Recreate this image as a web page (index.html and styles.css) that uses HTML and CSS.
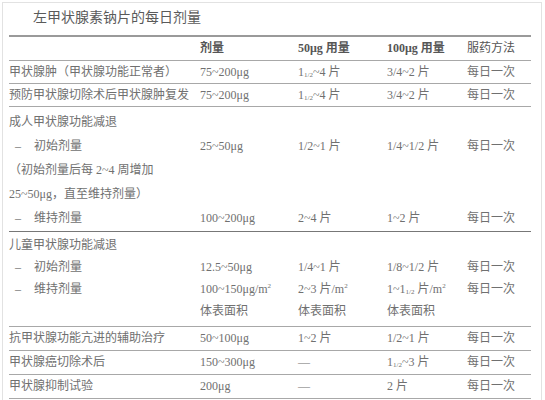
FILE: index.html
```html
<!DOCTYPE html>
<html lang="zh">
<head>
<meta charset="utf-8">
<title>左甲状腺素钠片的每日剂量</title>
<link rel="stylesheet" href="styles.css">
</head>
<body>
<div class="frame">
  <h1 class="title">左甲状腺素钠片的每日剂量</h1>
  <div class="table">
    <div class="group head">
      <div class="line"><span></span><span class="b">剂量</span><span class="b">50μg 用量</span><span class="b">100μg 用量</span><span class="h">服药方法</span></div>
    </div>
    <div class="group">
      <div class="line"><span>甲状腺肿（甲状腺功能正常者）</span><span>75~200μg</span><span>1<sub>1/2</sub>~4 片</span><span>3/4~2 片</span><span>每日一次</span></div>
    </div>
    <div class="group">
      <div class="line"><span>预防甲状腺切除术后甲状腺肿复发</span><span>75~200μg</span><span>1<sub>1/2</sub>~4 片</span><span>3/4~2 片</span><span>每日一次</span></div>
    </div>
    <div class="group adult dark">
      <div class="line"><span>成人甲状腺功能减退</span><span></span><span></span><span></span><span></span></div>
      <div class="line"><span><i class="dash">–</i>初始剂量</span><span>25~50μg</span><span>1/2~1 片</span><span>1/4~1/2 片</span><span>每日一次</span></div>
      <div class="line"><span>（初始剂量后每 2~4 周增加</span><span></span><span></span><span></span><span></span></div>
      <div class="line"><span>25~50μg，直至维持剂量）</span><span></span><span></span><span></span><span></span></div>
      <div class="line"><span><i class="dash">–</i>维持剂量</span><span>100~200μg</span><span>2~4 片</span><span>1~2 片</span><span>每日一次</span></div>
    </div>
    <div class="group child">
      <div class="line"><span>儿童甲状腺功能减退</span><span></span><span></span><span></span><span></span></div>
      <div class="line"><span><i class="dash">–</i>初始剂量</span><span>12.5~50μg</span><span>1/4~1 片</span><span>1/8~1/2 片</span><span>每日一次</span></div>
      <div class="line"><span><i class="dash">–</i>维持剂量</span><span>100~150μg/m<sup>2</sup></span><span>2~3 片/m<sup>2</sup></span><span>1~1<sub>1/2</sub> 片/m<sup>2</sup></span><span>每日一次</span></div>
      <div class="line"><span></span><span>体表面积</span><span>体表面积</span><span>体表面积</span><span></span></div>
    </div>
    <div class="group">
      <div class="line tall"><span>抗甲状腺功能亢进的辅助治疗</span><span>50~100μg</span><span>1~2 片</span><span>1/2~1 片</span><span>每日一次</span></div>
    </div>
    <div class="group">
      <div class="line tall"><span>甲状腺癌切除术后</span><span>150~300μg</span><span>—</span><span>1<sub>1/2</sub>~3 片</span><span>每日一次</span></div>
    </div>
    <div class="group">
      <div class="line tall"><span>甲状腺抑制试验</span><span>200μg</span><span>—</span><span>2 片</span><span>每日一次</span></div>
    </div>
  </div>
</div>
</body>
</html>
```
FILE: styles.css
```css
html, body {
  margin: 0;
  padding: 0;
  background: #fff;
}
body {
  font-family: "Liberation Serif", "Noto Sans CJK SC", serif;
  color: #707070;
  font-size: 12px;
}
.frame {
  margin: 2px 0 0 2px;
  height: 397px;
  overflow: hidden;
  border: 1px solid #e2e2e2;
  border-bottom: none;
  padding: 0 10px 0 6px;
  box-sizing: content-box;
  width: 522px;
}
.title {
  margin: 0;
  padding: 5px 0 0 24px;
  height: 27px;
  font-size: 14px;
  font-weight: normal;
  line-height: 20px;
  color: #5a5a5a;
}
.table {
  border-top: 2px solid #9a9a9a;
}
.group {
  border-bottom: 1px solid #a8a8a8;
}
.group.dark {
  border-bottom: 1px solid #777;
}
.line {
  display: grid;
  grid-template-columns: 191px 98px 89px 80px 1fr;
  height: 22px;
  line-height: 22px;
  white-space: nowrap;
}
.head .line {
  height: 23px;
  line-height: 23px;
}
.line.tall {
  height: 23px;
  line-height: 23px;
}
.adult {
  padding: 3px 0 1px;
}
.adult .line {
  height: 24px;
  line-height: 24px;
}
.child {
  padding: 2px 0 4px;
}
.child .line {
  height: 22px;
  line-height: 22px;
}
.b {
  font-weight: bold;
  color: #555;
}
.h {
  color: #555;
}
.dash {
  font-style: normal;
  display: inline-block;
  width: 25px;
  padding-left: 6px;
  box-sizing: border-box;
}
sub {
  font-size: 7px;
  vertical-align: -1px;
  line-height: 0;
}
sup {
  font-size: 7px;
  vertical-align: 5px;
  line-height: 0;
}
```
